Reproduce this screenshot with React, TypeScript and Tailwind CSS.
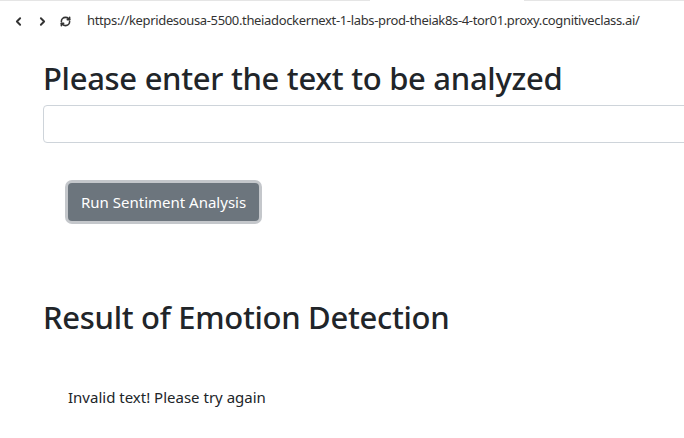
import { ChevronLeft, ChevronRight, RefreshCw } from 'lucide-react';

export default function App() {
  return (
    <div className="w-[684px] h-[438px] overflow-hidden bg-white text-[#212529] font-['Noto_Sans',sans-serif]">
      {/* browser bar */}
      <div className="relative h-[42px] flex items-center pl-[12px]">
        <div className="absolute top-0 left-0 w-[370px] h-px bg-[#e5e5e5]" />
        <div className="absolute top-0 left-[524px] w-[160px] h-px bg-[#e5e5e5]" />
        <ChevronLeft className="w-[13px] h-[13px] text-[#333]" strokeWidth={3.5} />
        <ChevronRight className="w-[13px] h-[13px] text-[#333] ml-[11px]" strokeWidth={3.5} />
        <RefreshCw className="w-[11px] h-[11px] text-[#333] ml-[11px]" strokeWidth={3.5} />
        <span className="ml-[16px] text-[13px] text-[#333] tracking-[-0.35px]">
          https://kepridesousa-5500.theiadockernext-1-labs-prod-theiak8s-4-tor01.proxy.cognitiveclass.ai/
        </span>
      </div>

      <div className="pl-[43px]">
        <h1 className="text-[31px] font-medium leading-[40px] tracking-[-0.3px] mt-[16px]">Please enter the text to be analyzed</h1>
        <input
          type="text"
          className="block w-[700px] h-[38px] mt-[7px] border border-[#ced4da] rounded-[4px] px-3"
        />
        <div className="pl-[22px] mt-[37px]">
          <button className="h-[44px] px-[3px] rounded-[7px] bg-[#c4c7cb]">
            <span className="flex items-center h-[38px] px-[13px] rounded-[4px] bg-[#6c757d] text-white text-[15px]">
              Run Sentiment Analysis
            </span>
          </button>
        </div>
        <h1 className="text-[31px] font-medium leading-[40px] tracking-[-0.3px] mt-[73px]">Result of Emotion Detection</h1>
        <div className="pl-[25px] mt-[49px] text-[15px]">Invalid text! Please try again</div>
      </div>
    </div>
  );
}
